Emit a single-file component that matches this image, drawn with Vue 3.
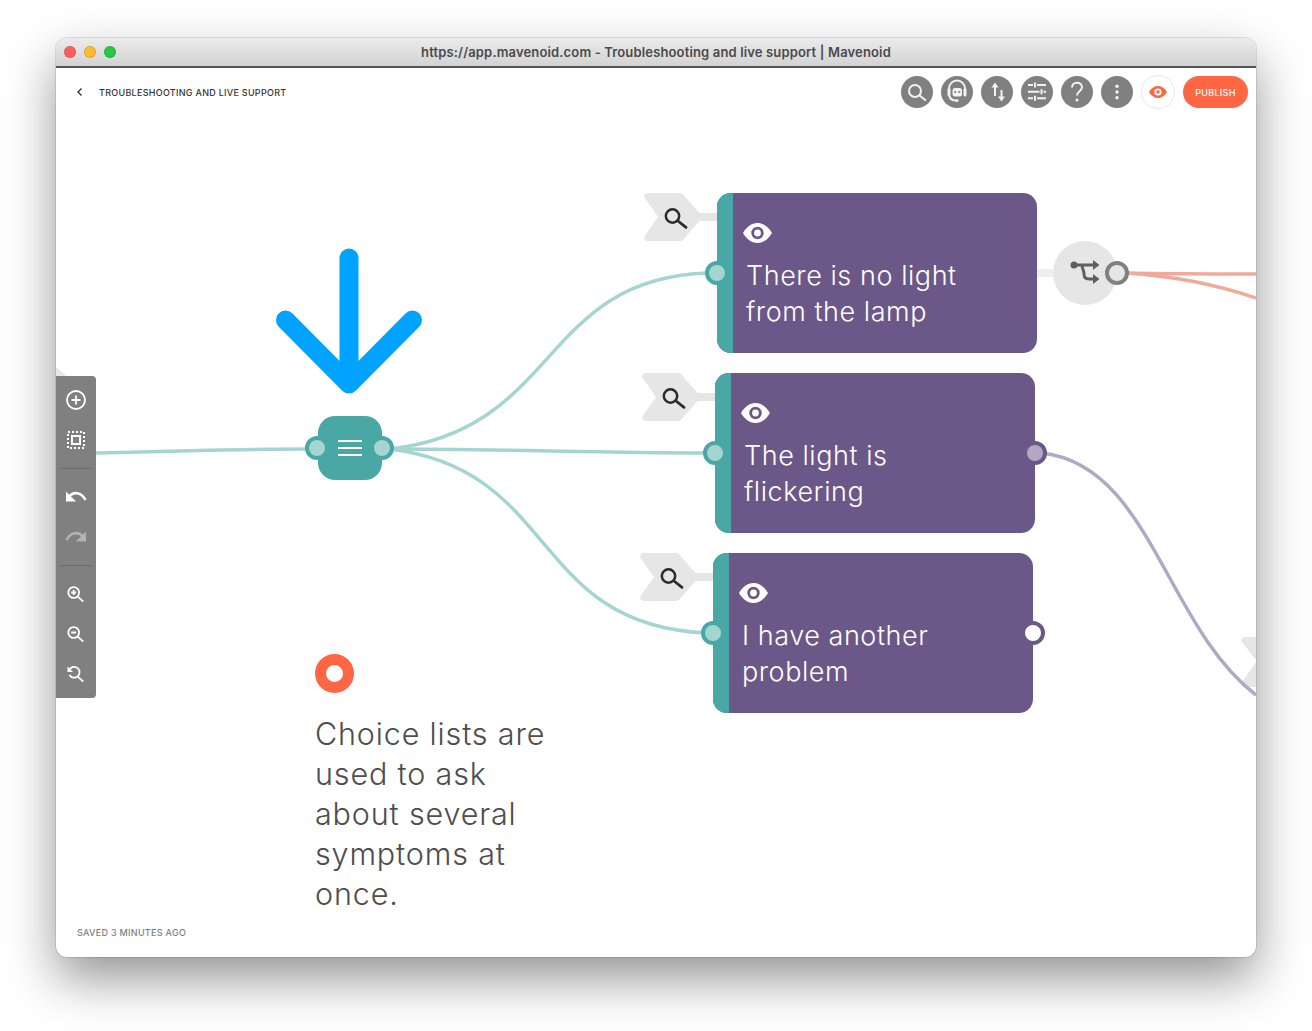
<script setup>
const nodes = [
  { id: 1, left: 661, top: 125, lines: ['There is no light', 'from the lamp'], port: null },
  { id: 2, left: 659, top: 305, lines: ['The light is', 'flickering'], port: 'open' },
  { id: 3, left: 657, top: 485, lines: ['I have another', 'problem'], port: 'empty' },
]
</script>

<template>
  <div class="page">
  <div class="window">
    <div class="titlebar">
      <div class="lights"><i class="red"></i><i class="yellow"></i><i class="green"></i></div>
      <div class="title">https://app.mavenoid.com - Troubleshooting and live support | Mavenoid</div>
      <div></div>
    </div>
    <div class="body">
      <header class="header">
        <div class="crumb">
          <svg width="8" height="10" viewBox="0 0 8 10"><path d="M5.500 1.500 2 5l3.500 3.500" fill="none" stroke="#333" stroke-width="1.400"/></svg>
          <span>TROUBLESHOOTING AND LIVE SUPPORT</span>
        </div>
        <div class="actions">
          <button class="round"><svg viewBox="0 0 32 32"><circle cx="14" cy="15" r="6"/><path d="m18.500 19.500 6.500 5"/></svg></button>
          <button class="round"><svg viewBox="0 0 32 32"><path d="M8 17v-4.500a8 8 0 0 1 16 0V17"/><rect class="solid" x="6.500" y="12" width="3" height="8.500" rx="1.500"/><rect class="solid" x="22.500" y="12" width="3" height="8.500" rx="1.500"/><rect class="solid" x="11.500" y="12" width="9.500" height="8.500" rx="2.500"/><circle class="hole" cx="14.200" cy="16" r="1.100"/><circle class="hole" cx="18.300" cy="16" r="1.100"/><path d="M8.500 20c.5 3 3 4.500 7 4.500"/><circle class="solid" cx="16" cy="24.500" r="1.500"/></svg></button>
          <button class="round"><svg viewBox="0 0 32 32"><path d="M14 10v10M20.500 14v9"/><path class="solid" d="m14 6.500 3.500 5h-7zM20.500 25.500l-3.500-5h7z"/></svg></button>
          <button class="round"><svg viewBox="0 0 32 32"><path d="M7 9h5M16 9h9M7 15.700h11.500M22.500 15.700H25M7 22.300h5M16 22.300h9M14 6.500v5M20.500 13.200v5M14 19.800v5"/></svg></button>
          <button class="round"><svg viewBox="0 0 32 32"><path d="M11 11.500c0-3 2.300-4.800 5-4.800s5 1.800 5 4.500c0 4-5 4-5 8.300"/><circle class="solid" cx="16" cy="24" r="1.500"/></svg></button>
          <button class="round"><svg viewBox="0 0 32 32"><circle class="solid" cx="16" cy="10.300" r="1.700"/><circle class="solid" cx="16" cy="16" r="1.700"/><circle class="solid" cx="16" cy="21.700" r="1.700"/></svg></button>
          <button class="preview"><svg width="18" height="12" viewBox="0 0 18 12"><path fill="#ff6643" fill-rule="evenodd" d="M9 0c3.800 0 7 2.500 9 6-2 3.500-5.200 6-9 6S2 9.500 0 6c2-3.500 5.200-6 9-6Zm0 2.400a3.600 3.600 0 1 0 0 7.200 3.600 3.600 0 0 0 0-7.200Z"/><circle cx="9" cy="6" r="1.800" fill="#ff6643"/></svg></button>
          <button class="publish">PUBLISH</button>
        </div>
      </header>

      <main class="canvas">
        <svg class="edges" viewBox="56 68 1200 889" width="1200" height="889">
          <path d="M56 367l10 9H56z" fill="#e6e6e6"/>
          <path d="M1256 637h-12a3 3 0 0 0-2 5l14 18zM1256 662l-14 20a3 3 0 0 0 2 5h12z" fill="#e6e6e6"/>
          <g fill="none" stroke="#a5d5d1" stroke-width="3.500">
            <path d="M96 453 C170 451 240 449 310 449"/>
            <path d="M390 449 C560 430 540 278 708 273"/>
            <path d="M390 449 C500 449 600 453 708 453"/>
            <path d="M390 449 C560 470 530 625 706 633"/>
          </g>
          <g fill="none" stroke="#f0a99b" stroke-width="3.500">
            <path d="M1125 273 C1170 274 1220 274 1256 274"/>
            <path d="M1125 273 C1175 276 1215 284 1256 298"/>
          </g>
          <path d="M1042 453 C1150 465 1165 625 1256 695" fill="none" stroke="#b3a8c4" stroke-width="3.500"/>
        </svg>

        <svg class="arrow" width="148" height="150" viewBox="0 0 148 150"><path d="M73 10v126M9.500 72 73 136l63.500-64" fill="none" stroke="#00a3ff" stroke-width="19" stroke-linecap="round" stroke-linejoin="round"/></svg>

        <div class="choice">
          <span class="port port-left"></span>
          <span class="port port-right"></span>
          <span class="burger"><i></i><i></i><i></i></span>
        </div>

        <article v-for="n in nodes" :key="n.id" class="node" :style="{ left: n.left + 'px', top: n.top + 'px' }">
          <div class="finder">
            <svg width="62" height="48" viewBox="0 0 62 48"><path d="M5 0h32a4 4 0 0 1 3 1.300L60 24 40 46.700a4 4 0 0 1-3 1.300H5c-3.500 0-5-3-3-5.500L15 24 2 5.500C0 3 1.500 0 5 0Z" fill="#e6e6e6"/><circle cx="29.500" cy="23" r="6.700" fill="none" stroke="#2b2b2b" stroke-width="2.500"/><path d="m35 28 8 6.300" stroke="#2b2b2b" stroke-width="2.800" stroke-linecap="round"/></svg>
          </div>
          <div class="stub"></div>
          <div class="stripe"><span class="port"></span></div>
          <div class="content">
            <svg class="eye" width="29" height="20" viewBox="0 0 29 20"><path fill="#fff" fill-rule="evenodd" d="M14.500 0C20.500 0 25.500 4 29 10c-3.500 6-8.500 10-14.500 10S3.500 16 0 10C3.500 4 8.500 0 14.500 0Zm0 3.800a6.200 6.200 0 1 0 0 12.400 6.200 6.200 0 0 0 0-12.400Z"/><circle cx="14.500" cy="10" r="3.400" fill="#fff"/></svg>
            <p><span v-for="l in n.lines" :key="l">{{ l }}</span></p>
          </div>
          <span v-if="n.port" class="out" :class="n.port"></span>
        </article>

        <div class="branch">
          <div class="stub2"></div>
          <div class="disc">
            <svg width="32" height="32" viewBox="0 0 32 32"><circle cx="5" cy="8" r="3.500" fill="#5f5f5f"/><path d="M5 8h20M13 8c0 4 2 5 2 9 0 4 2 5 5 5h5" fill="none" stroke="#5f5f5f" stroke-width="3"/><path d="m24 3 6.500 5-6.500 5zM24 17l6.500 5-6.500 5z" fill="#5f5f5f"/></svg>
            <span class="bport"></span>
          </div>
        </div>

        <aside class="note">
          <div class="dot"></div>
          <p>Choice lists are used to ask about several symptoms at once.</p>
        </aside>

        <nav class="tools">
          <button><svg viewBox="0 0 24 24"><circle cx="12" cy="12" r="9"/><path d="M12 7.500v9M7.500 12h9"/></svg></button>
          <button><svg viewBox="0 0 24 24"><rect class="bold" x="8" y="8" width="8" height="8"/><rect class="bold" x="4" y="4" width="16" height="16" stroke-dasharray="2 2"/></svg></button>
          <hr />
          <button><svg viewBox="0 0 24 24"><path class="solid" d="M2 6.500v10h10z"/><path class="bold3" d="M5 12c4-5.500 12-5.500 16.500 3"/></svg></button>
          <button class="off"><svg viewBox="0 0 24 24"><path class="solid" d="M22 6.500v10H12z"/><path class="bold3" d="M19 12C15 6.500 7 6.500 2.500 15"/></svg></button>
          <hr />
          <button><svg viewBox="0 0 24 24"><circle cx="9.700" cy="10.500" r="5.400"/><path d="m13.800 14.600 5.500 5.100M9.700 8v5M7.200 10.500h5"/></svg></button>
          <button><svg viewBox="0 0 24 24"><circle cx="9.700" cy="10.500" r="5.400"/><path d="m13.800 14.600 5.500 5.100M7.200 10.500h5"/></svg></button>
          <button><svg viewBox="0 0 24 24"><path d="M5.500 7.500A5.400 5.400 0 1 1 5.500 13"/><path class="solid" d="M3.500 4.500v5.500h5.500z"/><path d="m13.800 14.600 5.500 5.100"/></svg></button>
        </nav>

        <footer class="saved">SAVED 3 MINUTES AGO</footer>
      </main>
    </div>
  </div>
  </div>
</template>

<style scoped>
.page { height: 1031px; box-sizing: border-box; padding: 38px 0 0 56px; overflow: hidden; }
.window { width: 1200px; height: 919px; border-radius: 11px; background: #fff; box-shadow: 0 22px 50px rgba(0,0,0,.42), 0 0 0 1px rgba(0,0,0,.1); overflow: hidden; display: flex; flex-direction: column; position: relative; }
.titlebar { height: 28px; flex: none; display: grid; grid-template-columns: 1fr auto 1fr; align-items: center; background: linear-gradient(#ebebeb, #d3d3d3); border-bottom: 2px solid #565350; padding: 0 8px; }
.lights { display: flex; gap: 8px; }
.lights i { width: 12px; height: 12px; border-radius: 50%; box-sizing: border-box; border: .5px solid rgba(0,0,0,.12); }
.red { background: #ff5f57; } .yellow { background: #febc2e; } .green { background: #28c840; }
.title { font: 600 13px "Inter", "Liberation Sans", sans-serif; color: #4a4a4a; letter-spacing: .15px; }
.body { flex: 1; display: flex; flex-direction: column; position: relative; min-height: 0; }
.header { height: 48px; flex: none; display: flex; align-items: center; justify-content: space-between; padding: 0 8px 0 20px; position: relative; z-index: 3; }
.crumb { display: flex; align-items: center; gap: 15px; font: 500 9px "Inter", "Liberation Sans", sans-serif; letter-spacing: .28px; color: #333; }
.actions { display: flex; align-items: center; gap: 8px; }
button { border: 0; padding: 0; background: none; display: flex; align-items: center; justify-content: center; }
.round { width: 32px; height: 32px; border-radius: 50%; background: #808080; }
.round svg { width: 32px; height: 32px; fill: none; stroke: #f2f2f2; stroke-width: 2; }
.round .solid { fill: #f2f2f2; stroke: none; }
.round .hole { fill: #808080; stroke: none; }
.preview { width: 34px; height: 34px; box-sizing: border-box; border: 1px solid #e8e8e8; border-radius: 50%; background: #fff; }
.publish { width: 65px; height: 32px; border-radius: 16px; background: #ff6643; color: #fff; font: 500 9px "Inter", "Liberation Sans", sans-serif; letter-spacing: .3px; }
.canvas { position: absolute; inset: 0; overflow: hidden; }
.edges { position: absolute; left: 0; top: 0; }
.arrow { position: absolute; left: 220px; top: 180px; }
.choice { position: absolute; left: 262px; top: 348px; width: 64px; height: 64px; border-radius: 17px; background: #49a8a5; display: flex; align-items: center; justify-content: center; }
.port { position: absolute; width: 16px; height: 16px; border: 4px solid #49a8a5; border-radius: 50%; background: #a5d5d1; }
.port-left { left: -13px; top: 20px; }
.port-right { right: -12px; top: 20px; }
.burger { display: flex; flex-direction: column; gap: 4.500px; }
.burger i { display: block; width: 24px; height: 2.500px; background: #fff; }
.node { position: absolute; width: 320px; height: 160px; display: flex; border-radius: 14px; background: #6c5888; color: #fff; }
.finder { position: absolute; left: -74px; top: 0; line-height: 0; }
.stub { position: absolute; left: -20px; top: 20px; width: 20px; height: 8px; background: #e6e6e6; }
.stripe { width: 16px; flex: none; background: #49a8a5; border-radius: 14px 0 0 14px; position: relative; }
.stripe .port { left: -12px; top: 68px; }
.content { padding: 30px 0 0 10px; }
.eye { display: block; margin-bottom: 15px; }
.content p { margin: 0 0 0 3px; font: 300 27px/36px "Inter", sans-serif; letter-spacing: .55px; }
.content p span { display: block; }
.out { position: absolute; right: -12px; top: 68px; width: 16px; height: 16px; border: 4px solid #6c5888; border-radius: 50%; }
.out.open { background: #b3a8c4; }
.out.empty { background: #fff; }
.branch { position: absolute; left: 981px; top: 173px; display: flex; align-items: center; }
.stub2 { width: 16px; height: 8px; background: #eeeeee; }
.disc { width: 64px; height: 64px; border-radius: 50%; background: #e6e6e6; display: flex; align-items: center; justify-content: center; position: relative; }
.bport { position: absolute; right: -12px; top: 20px; width: 16px; height: 16px; border: 4px solid #808080; border-radius: 50%; background: #e6e6e6; }
.note { position: absolute; left: 259px; top: 586px; width: 240px; }
.dot { width: 17px; height: 17px; border: 11.500px solid #ff6643; border-radius: 50%; background: #fff; }
.note p { margin: 21px 0 0; font: 300 30.500px/40px "Inter", sans-serif; letter-spacing: .85px; color: #4d4d4d; }
.tools { position: absolute; left: 0; top: 308px; width: 40px; height: 322px; box-sizing: border-box; padding-top: 4px; background: #808080; border-radius: 0 4px 4px 0; display: flex; flex-direction: column; align-items: center; }
.tools button { width: 40px; height: 40px; flex: none; }
.tools svg { width: 24px; height: 24px; fill: none; stroke: #fff; stroke-width: 1.800; }
.tools .bold { stroke-width: 2; }
.tools .bold3 { stroke-width: 2.600; }
.tools .solid { fill: #fff; stroke: none; }
.tools .off { opacity: .4; }
.tools hr { width: 30px; height: 1px; flex: none; border: 0; margin: 8px 0; background: #6b6b6b; }
.saved { position: absolute; left: 21px; bottom: 19px; font: 500 9px "Inter", "Liberation Sans", sans-serif; letter-spacing: .29px; color: #808080; }
</style>

<style>
html, body { background: #fff; }
</style>
